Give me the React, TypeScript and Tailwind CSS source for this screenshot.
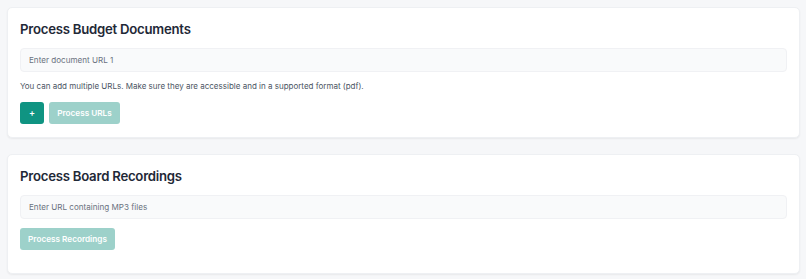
import React from "react";

export default function App() {
  return (
    <div
      className="min-h-[279px] w-[806px] bg-[#f6f7f9] pl-[7px] pr-[6px] pt-[7px] pb-[4px] flex flex-col gap-[16px]"
      style={{ fontFamily: "Inter, 'Noto Sans', sans-serif" }}
    >
      <div className="rounded-[5px] bg-white shadow-[0_1px_2px_rgba(0,0,0,0.06)] border border-[#eef0f3] px-[12px] pt-[12px] pb-[13px] flex flex-col">
        <h2 className="text-[13.2px] leading-[18px] font-semibold text-[#1f2937] tracking-[-0.25px]">Process Budget Documents</h2>
        <div className="mt-[10px] h-[24px] rounded-[4px] bg-[#f9fafb] border border-[#f0f1f4] flex items-center px-[8px] text-[8.1px] text-[#6b7280]">
          Enter document URL 1
        </div>
        <p className="mt-[8px] text-[8px] leading-[12px] text-[#4b5563]">
          You can add multiple URLs. Make sure they are accessible and in a supported format (pdf).
        </p>
        <div className="mt-[10px] flex gap-[5px]">
          <button className="h-[22px] w-[24px] rounded-[3px] bg-[#0f9482] text-white text-[9px] font-semibold flex items-center justify-center">+</button>
          <button className="h-[22px] w-[71px] rounded-[3px] bg-[#9dd1ca] text-white text-[8.2px] font-semibold flex items-center justify-center">Process URLs</button>
        </div>
      </div>
      <div className="rounded-[5px] bg-white shadow-[0_1px_2px_rgba(0,0,0,0.06)] border border-[#eef0f3] px-[12px] pt-[12px] pb-[23px] flex flex-col">
        <h2 className="text-[13.2px] leading-[18px] font-semibold text-[#1f2937] tracking-[-0.25px]">Process Board Recordings</h2>
        <div className="mt-[10px] h-[24px] rounded-[4px] bg-[#f9fafb] border border-[#f0f1f4] flex items-center px-[8px] text-[8.1px] text-[#6b7280]">
          Enter URL containing MP3 files
        </div>
        <div className="mt-[9px] flex">
          <button className="h-[22px] w-[95px] rounded-[3px] bg-[#9dd1ca] text-white text-[8.2px] font-semibold flex items-center justify-center">Process Recordings</button>
        </div>
      </div>
    </div>
  );
}
